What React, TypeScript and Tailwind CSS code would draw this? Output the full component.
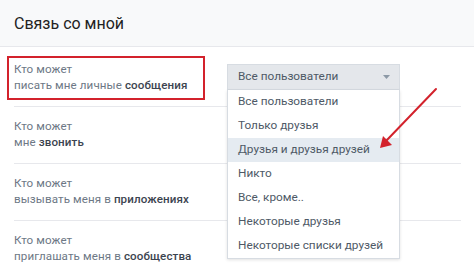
import React from "react";

const options = [
  "Все пользователи",
  "Только друзья",
  "Друзья и друзья друзей",
  "Никто",
  "Все, кроме..",
  "Некоторые друзья",
  "Некоторые списки друзей",
];

const rows = [
  { lead: "вызывать меня в ", bold: "приложениях" },
  { lead: "приглашать меня в ", bold: "сообщества" },
];

function Label({ lead, bold }: { lead: string; bold: string }) {
  return (
    <div className="text-[11.6px] leading-[15.5px] text-[#6d7885] tracking-[0.1px]">
      <div>Кто может</div>
      <div>
        {lead}
        <span className="font-medium text-[#3c4450]">{bold}</span>
      </div>
    </div>
  );
}

export default function App() {
  return (
    <div
      className="relative w-[474px] h-[266px] overflow-hidden bg-white"
      style={{ fontFamily: "Roboto, 'Noto Sans', sans-serif" }}
    >
      <div className="h-[47px] bg-[#f8f9fa] border-b border-[#e7e8ec] flex items-center px-[14px]">
        <span className="text-[16px] text-[#222] pt-[1px]">Связь со мной</span>
      </div>

      <div className="pl-[14px] pr-[13px]">
        {/* row 1 */}
        <div className="grid grid-cols-[213px_173px] pt-[9px] pb-[6px] border-b border-[#e7e8ec]">
          <div className="-ml-[7px] w-[198px] h-[44px] border-2 border-[#d3222c] pl-[5px] pt-[4px]">
            <Label lead="писать мне личные " bold="сообщения" />
          </div>
          <div className="relative mt-[8px]">
            <div className="h-[26px] bg-[#e4e7eb] border border-[#d7dce2] flex items-center pl-[10px] pr-[9px] text-[11.8px] text-[#4e5966]">
              <span className="flex-1">Все пользователи</span>
              <svg width="7" height="4" viewBox="0 0 7 4">
                <path d="M0 0h7L3.5 4z" fill="#8c99a6" />
              </svg>
            </div>
            <div className="absolute left-0 top-[26px] w-[173px] z-10 bg-white border border-t-0 border-[#d7dce2] shadow-[0_1px_3px_rgba(0,0,0,0.12)]">
              {options.map((o, i) => (
                <div
                  key={o}
                  className={`h-[24px] flex items-center pl-[10px] text-[11.8px] text-[#4e5966] ${
                    i === 2 ? "bg-[#e5ebf1]" : ""
                  }`}
                >
                  {o}
                </div>
              ))}
            </div>
          </div>
        </div>

        {/* row 2 */}
        <div className="pt-[12px] pb-[13px] border-b border-[#e7e8ec]">
          <Label lead="мне " bold="звонить" />
        </div>

        {rows.map((r, i) => (
          <div
            key={r.bold}
            className={`pt-[12px] pb-[13px] ${i === 0 ? "border-b border-[#e7e8ec]" : ""}`}
          >
            <Label lead={r.lead} bold={r.bold} />
          </div>
        ))}
      </div>

      <svg className="absolute left-0 top-0 z-20 pointer-events-none" width="474" height="266">
        <line x1="436" y1="89" x2="386" y2="141" stroke="#d3222c" strokeWidth="2" strokeLinecap="round" />
        <path d="M380 148 L383 136 L392 145 Z" fill="#d3222c" />
      </svg>
    </div>
  );
}
